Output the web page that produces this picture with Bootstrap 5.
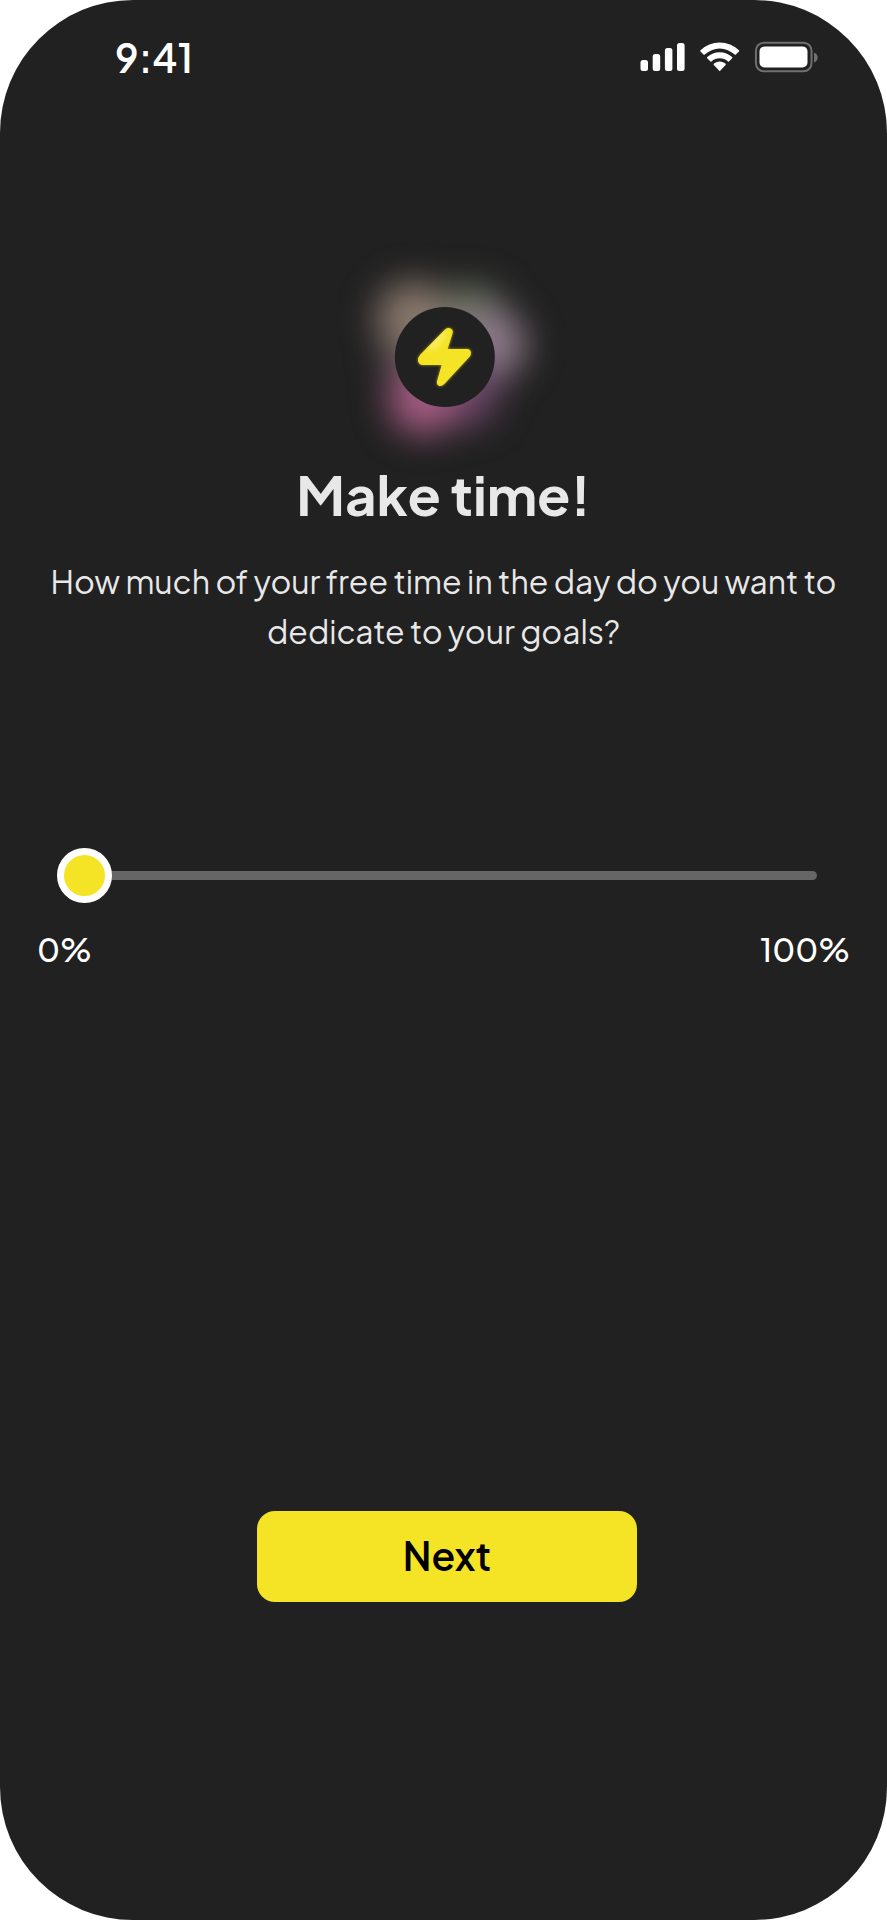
<!DOCTYPE html>
<html lang="en">
<head>
<meta charset="utf-8">
<meta name="viewport" content="width=device-width, initial-scale=1">
<title>Make time!</title>
<link href="https://cdn.jsdelivr.net/npm/bootstrap@5.3.0/dist/css/bootstrap.min.css" rel="stylesheet">
<style>
body{background:#fff;font-family:"Plus Jakarta Sans",Inter,sans-serif}
.screen{width:887px;height:1920px;background:#212121;border-radius:133px;color:#fff}
.statusbar{height:240px;padding:38px 69px 0 115px}
.clock{font-size:39px;line-height:40px;font-weight:600;letter-spacing:.2px}
.hero-art{margin-left:340px}
.hero-title{font-size:54.5px;line-height:70px;font-weight:700;color:#e8e8e8;margin:-1px 0 27px}
.hero-text{font-size:31.9px;line-height:50px;font-weight:370;color:#e8e8e8;margin:0 0 192px}
.slider{height:55px;margin:0 70px 26px 56.5px}
.thumb{width:55px;height:55px;border:7px solid #fff;background:#f5e425}
.track{height:9.5px;background:#666;border-radius:0 5px 5px 0;margin-left:-2px}
.limits{font-size:31.8px;line-height:40px;font-weight:550;margin:0 37px 541.5px}
.btn-next{--bs-btn-bg:#f5e425;--bs-btn-color:#000;--bs-btn-hover-bg:#e6d61c;width:380px;height:91px;border:0;border-radius:18px;font-size:38.8px;line-height:48px;font-weight:600;margin-left:257px}
</style>
</head>
<body>
<main class="screen overflow-hidden">
  <header class="statusbar d-flex justify-content-between align-items-start">
    <div class="clock">9:41</div>
    <svg width="180" height="36" viewBox="638 38 180 36" fill="#fff" aria-hidden="true">
      <rect x="640.5" y="60" width="7.5" height="11" rx="2.5"/><rect x="652.7" y="54" width="7.5" height="17" rx="2.5"/><rect x="664.9" y="48" width="7.5" height="23" rx="2.5"/><rect x="677" y="43" width="7.6" height="28" rx="2.5"/>
      <path d="M719.7 71.2l-5.9-6.1q-.7-.8.2-1.5a9.5 9.5 0 0 1 11.4 0q.9.7.2 1.5z"/>
      <path d="M707.2 58.2q-.6-.6.1-1.2a18.5 18.5 0 0 1 24.8 0q.7.6.1 1.2l-3 3.1q-.6.6-1.2.1a12.5 12.5 0 0 0-16.6 0q-.6.5-1.2-.1z"/>
      <path d="M700.5 51.5q-.6-.6 0-1.2a27.8 27.8 0 0 1 38.4 0q.6.6 0 1.2l-3 3.1q-.6.6-1.2 0a21.8 21.8 0 0 0-30 0q-.6.6-1.2 0z"/>
      <rect x="755.9" y="42.7" width="55.6" height="28.6" rx="8" fill="none" stroke="#707070" stroke-width="2"/>
      <rect x="759.5" y="46.4" width="48" height="21" rx="5"/>
      <path d="M814 52.5q3.7 1.5 3.7 5t-3.7 5z" fill="#707070"/>
    </svg>
  </header>

  <div class="text-center">
    <svg class="hero-art d-block overflow-visible" width="210" height="220" viewBox="0 0 630 660" aria-hidden="true">
      <defs>
        <filter id="soft" x="-60%" y="-60%" width="220%" height="220%" color-interpolation-filters="sRGB"><feGaussianBlur stdDeviation="52"/></filter>
        <filter id="glow" x="-20%" y="-20%" width="140%" height="140%"><feGaussianBlur stdDeviation="5"/></filter>
        <filter id="sheen" x="-50%" y="-50%" width="200%" height="200%"><feGaussianBlur stdDeviation="8"/></filter>
        <path id="bolt" d="M316 268Q323 262 330 265Q340 269 338 279L323 327H382Q391 328 393 337Q394 345 388 351L313 432Q306 439 298 438Q289 435 291 424L305 375H248Q236 374 234 362Q233 353 240 345Z"/>
        <clipPath id="boltclip"><use href="#bolt"/></clipPath>
      </defs>
      <g filter="url(#soft)">
        <circle cx="315" cy="340" r="185" fill="#564c52"/>
        <circle cx="395" cy="235" r="100" fill="#68735f"/>
        <circle cx="220" cy="235" r="110" fill="#8a796e"/>
        <circle cx="450" cy="312" r="108" fill="#8e7b8a"/>
        <circle cx="375" cy="455" r="102" fill="#6a4667"/>
        <circle cx="250" cy="480" r="104" fill="#a65c83"/>
      </g>
      <circle cx="314.5" cy="351" r="150" fill="#212121"/>
      <use href="#bolt" fill="#a99e18" filter="url(#glow)"/>
      <use href="#bolt" fill="#f5e425"/>
      <g clip-path="url(#boltclip)"><ellipse cx="292" cy="303" rx="40" ry="13" transform="rotate(-48 292 303)" fill="#faf07b" opacity=".65" filter="url(#sheen)"/></g>
    </svg>
    <h1 class="hero-title">Make time!</h1>
    <p class="hero-text">How much of your free time in the day do you want to<br>dedicate to your goals?</p>
  </div>

  <div class="slider d-flex align-items-center" role="slider" aria-valuemin="0" aria-valuemax="100" aria-valuenow="0">
    <div class="thumb rounded-circle flex-shrink-0 position-relative z-1"></div>
    <div class="track flex-grow-1"></div>
  </div>
  <div class="limits d-flex justify-content-between"><span>0%</span><span>100%</span></div>
  <button type="button" class="btn btn-next d-block p-0">Next</button>
</main>
<script src="https://cdn.jsdelivr.net/npm/bootstrap@5.3.0/dist/js/bootstrap.bundle.min.js"></script>
</body>
</html>
